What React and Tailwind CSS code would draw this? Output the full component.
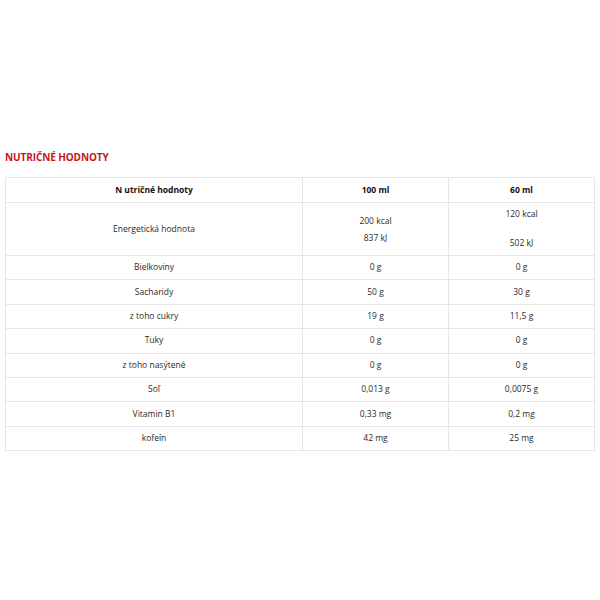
const rows = [
  ['Bielkoviny', '0 g', '0 g'],
  ['Sacharidy', '50 g', '30 g'],
  ['z toho cukry', '19 g', '11,5 g'],
  ['Tuky', '0 g', '0 g'],
  ['z toho nasýtené', '0 g', '0 g'],
  ['Soľ', '0,013 g', '0,0075 g'],
  ['Vitamin B1', '0,33 mg', '0,2 mg'],
  ['kofeín', '42 mg', '25 mg'],
];

export default function App() {
  return (
    <div className="min-h-[600px] bg-white pt-[151px] px-[5px] font-['Open_Sans',sans-serif] text-[#2a2a2a]">
      <h2 className="text-[10px] font-bold text-[#c4161c] leading-[12px] tracking-[-0.1px]">NUTRIČNÉ HODNOTY</h2>
      <table className="mt-[14px] w-[590px] border-collapse border border-[#e6e6e6] text-[8.5px] font-medium text-center">
        <thead>
          <tr className="h-[25px]">
            <th className="w-[297px] border border-[#e6e6e6] font-bold text-[#111]">N utričné hodnoty</th>
            <th className="w-[146px] border border-[#e6e6e6] font-bold text-[#111]">100 ml</th>
            <th className="border border-[#e6e6e6] font-bold text-[#111]">60 ml</th>
          </tr>
        </thead>
        <tbody>
          <tr className="h-[53px]">
            <td className="border border-[#e6e6e6]">Energetická hodnota</td>
            <td className="border border-[#e6e6e6]">
              <div className="flex flex-col items-center gap-[4px] pt-[1px]">
                <span>200 kcal</span>
                <span>837 kJ</span>
              </div>
            </td>
            <td className="border border-[#e6e6e6]">
              <div className="flex flex-col items-center gap-[16px]">
                <span>120 kcal</span>
                <span>502 kJ</span>
              </div>
            </td>
          </tr>
          {rows.map(([name, a, b]) => (
            <tr key={name} className="h-[24.4px]">
              <td className="border border-[#e6e6e6]">{name}</td>
              <td className="border border-[#e6e6e6]">{a}</td>
              <td className="border border-[#e6e6e6]">{b}</td>
            </tr>
          ))}
        </tbody>
      </table>
    </div>
  );
}
